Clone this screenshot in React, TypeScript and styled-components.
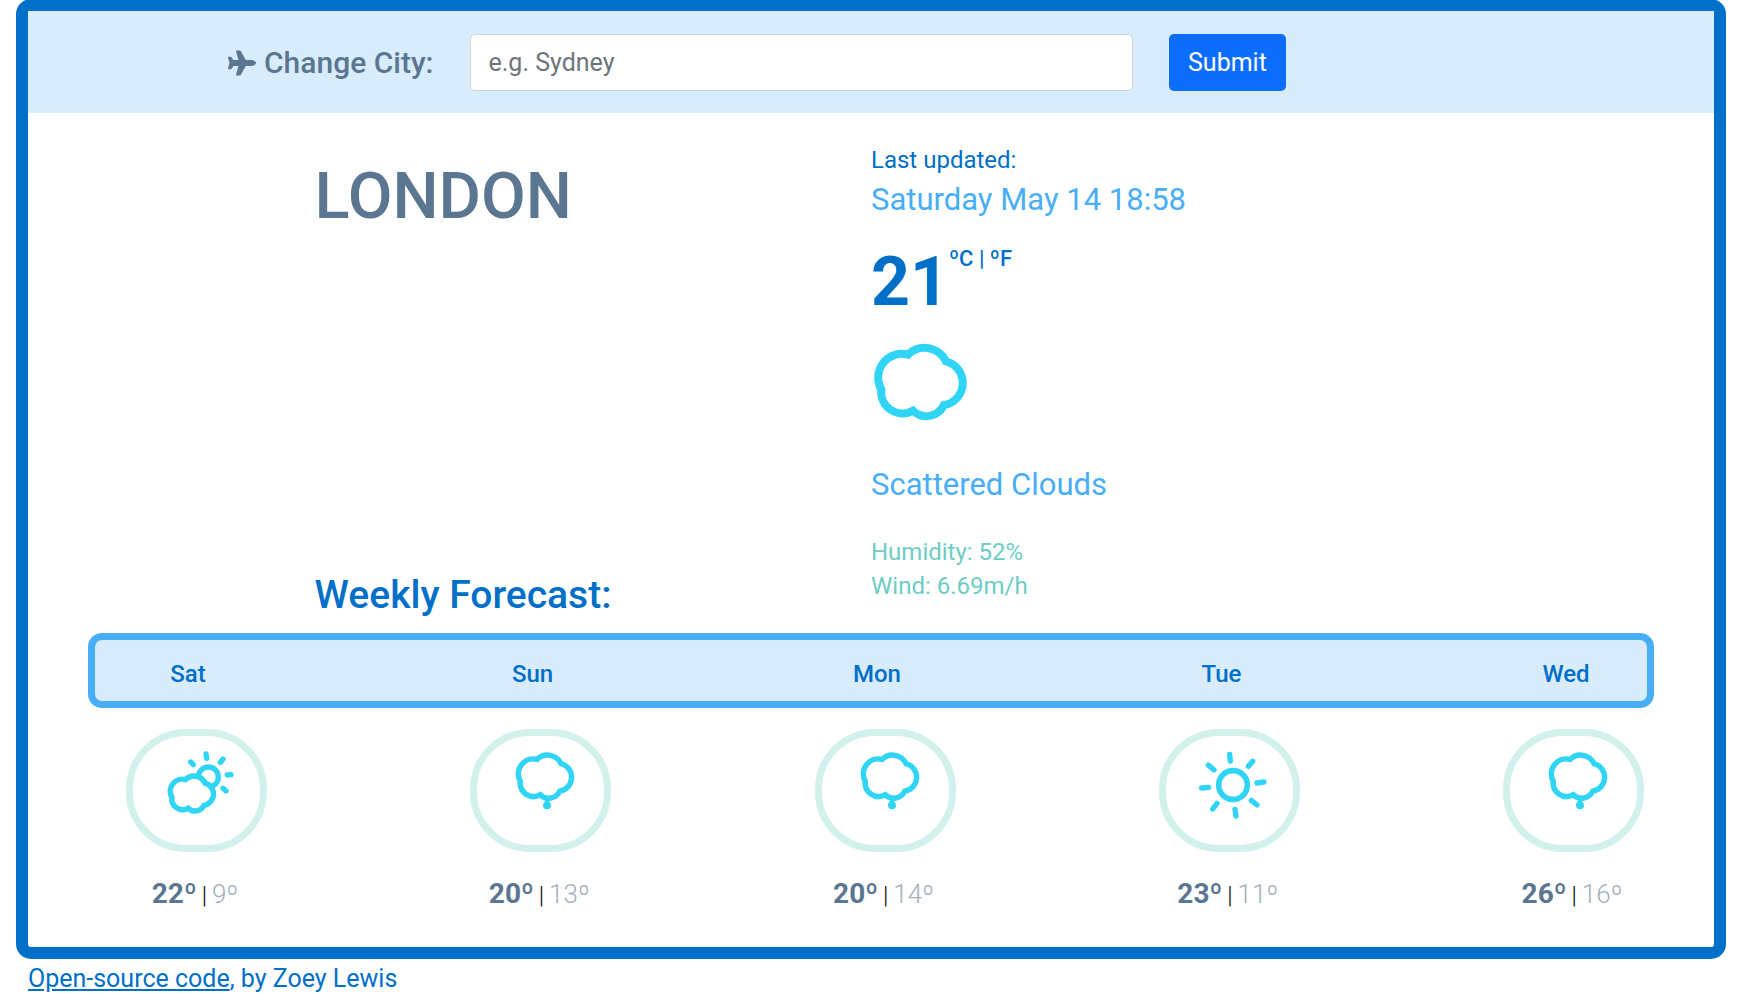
import React from "react";
import styled, { createGlobalStyle } from "styled-components";
import { FaPlane } from "react-icons/fa6";

const GlobalStyle = createGlobalStyle`
  *, *::before, *::after { box-sizing: border-box; }
  body {
    margin: 0;
    background: #fff;
    color: #006fc8;
    font-family: Roboto, "Liberation Sans", sans-serif;
    font-size: 24px;
    line-height: 34px;
  }
  h1, h2, p, ul { margin: 0; padding: 0; }
`;

const Page = styled.div`
  padding: 0 16px;
`;

const Frame = styled.main`
  margin-top: -1px;
  border: 12px solid #006fc8;
  border-radius: 15px;
  background: #fff;
`;

const SearchBar = styled.form`
  display: grid;
  grid-template-columns: 3fr 5fr 4fr;
  align-items: center;
  padding: 23px 0 22px;
  background: #d9ecfc;
`;

const SearchLabel = styled.label`
  display: flex;
  align-items: center;
  justify-content: flex-end;
  gap: 8px;
  padding-right: 16px;
  color: #5a7690;
  font-size: 30px;
  font-weight: 500;
`;

const SearchField = styled.div`
  padding: 0 19px 0 20px;
`;

const CityInput = styled.input`
  display: block;
  width: 100%;
  height: 57px;
  padding: 0 18px;
  border: 1px solid #ced4da;
  border-radius: 5px;
  background: #fff;
  color: #212529;
  font: inherit;
  font-size: 25px;
  &::placeholder { color: #6c757d; opacity: 1; }
`;

const SubmitButton = styled.button`
  justify-self: start;
  height: 57px;
  margin-left: 17px;
  padding: 0 19px;
  border: 0;
  border-radius: 5px;
  background: #0d6efd;
  color: #fff;
  font: inherit;
  font-size: 25px;
  cursor: pointer;
`;

const Overview = styled.section`
  display: grid;
  grid-template-columns: 1fr 1fr;
  padding-top: 30px;
`;

const Headings = styled.div`
  display: flex;
  flex-direction: column;
  justify-content: space-between;
  padding: 13px 0 0 34%;
`;

const City = styled.h1`
  color: #5a7690;
  font-size: 65px;
  font-weight: 500;
  line-height: 80px;
`;

const ForecastTitle = styled.h2`
  font-size: 39px;
  font-weight: 500;
  line-height: 44px;
`;

const Current = styled.div`
  padding-bottom: 14px;
`;

const Highlight = styled.p`
  color: #48aef8;
  font-size: 31px;
  line-height: 45px;
`;

const Temperature = styled.div`
  display: flex;
  align-items: flex-start;
  margin: 20px 0 12px;
`;

const Degrees = styled.strong`
  font-size: 68px;
  font-weight: 700;
  line-height: 80px;
`;

const Units = styled.span`
  font-size: 22px;
  font-weight: 500;
`;

const UnitLink = styled.a`
  color: inherit;
  text-decoration: none;
`;

const CurrentIcon = styled.svg`
  display: block;
  width: 100px;
  height: 100px;
  margin-bottom: 28px;
`;

const Details = styled.ul`
  margin-top: 28px;
  list-style: none;
  color: #6dcdc4;
`;

const Week = styled.section`
  padding: 16px 60px 35px;
`;

const DayBar = styled.div`
  display: flex;
  justify-content: space-between;
  padding: 17px 21px 10px 33px;
  border: 7px solid #48aef8;
  border-radius: 14px;
  background: #d9ecfc;
`;

const DayName = styled.span`
  width: 120px;
  font-weight: 500;
  text-align: center;
`;

const DayRow = styled.div`
  display: flex;
  justify-content: space-between;
  padding: 21px 10px 0 38px;
`;

const Day = styled.div`
  width: 141px;
`;

const Pill = styled.div`
  padding: 9px 20px 20px 27px;
  border: 7px solid #d2f1ed;
  border-radius: 60px;
`;

const DayIcon = styled.svg`
  display: block;
  width: 80px;
  height: 80px;
`;

const Range = styled.p`
  display: flex;
  align-items: baseline;
  justify-content: center;
  gap: 5px;
  margin-top: 25px;
  padding-right: 3px;
  color: #000;
`;

const High = styled.strong`
  color: #5a7690;
  font-size: 28px;
  font-weight: 700;
`;

const Divider = styled.span`
  font-weight: 300;
`;

const Low = styled.span`
  color: #a0b0c0;
  font-size: 26px;
  font-weight: 300;
`;

const Footer = styled.footer`
  padding: 3px 12px;
  font-size: 25px;
`;

const SourceLink = styled.a`
  color: inherit;
  text-decoration: underline;
`;

const SKY = "#30d5f5";

function CloudPath({ stroke }: { stroke: number }) {
  return (
    <path
      d="M204 374 A71 71 0 0 0 124 478 A64 64 0 0 0 219 542 A58 58 0 0 0 312 525 A67 67 0 0 0 318 394 A71 71 0 0 0 204 374 Z"
      fill="#fff"
      stroke={SKY}
      strokeWidth={stroke}
    />
  );
}

function Rays({ lines }: { lines: number[][] }) {
  return (
    <g stroke={SKY} strokeWidth={16} strokeLinecap="round">
      {lines.map(([x1, y1, x2, y2]) => (
        <line key={`${x1}-${y1}`} x1={x1} y1={y1} x2={x2} y2={y2} />
      ))}
    </g>
  );
}

type Sky = "partly" | "rain" | "sun";

function SkyIcon({ sky }: { sky: Sky }) {
  if (sky === "sun") {
    return (
      <DayIcon viewBox="160 76 240 240" role="img" aria-label="Clear sky">
        <circle cx={280} cy={196} r={43} fill="none" stroke={SKY} strokeWidth={17} />
        <Rays
          lines={[
            [270, 104, 272, 124],
            [339, 125, 326, 140],
            [373, 187, 352, 190],
            [352, 256, 335, 242],
            [289, 289, 286, 269],
            [219, 268, 232, 251],
            [186, 205, 207, 203],
            [206, 136, 223, 151],
          ]}
        />
      </DayIcon>
    );
  }
  if (sky === "rain") {
    return (
      <DayIcon viewBox="146 75 240 240" role="img" aria-label="Rain">
        <g transform="translate(188 105) scale(0.63) translate(-113 -353)">
          <CloudPath stroke={26} />
        </g>
        <path d="M275 232 C278 244 287 247 287 256 A12 12 0 0 1 263 256 C263 247 272 244 275 232 Z" fill={SKY} />
      </DayIcon>
    );
  }
  return (
    <DayIcon viewBox="121 76 240 240" role="img" aria-label="Partly cloudy">
      <circle cx={266} cy={172} r={30} fill="none" stroke={SKY} strokeWidth={16} />
      <Rays
        lines={[
          [259, 103, 261, 116],
          [310, 118, 302, 128],
          [334, 165, 323, 166],
          [319, 214, 310, 206],
          [213, 127, 221, 135],
        ]}
      />
      <g transform="translate(151 169) scale(0.512) translate(-113 -353)">
        <CloudPath stroke={32} />
      </g>
    </DayIcon>
  );
}

const days: { name: string; sky: Sky; high: number; low: number }[] = [
  { name: "Sat", sky: "partly", high: 22, low: 9 },
  { name: "Sun", sky: "rain", high: 20, low: 13 },
  { name: "Mon", sky: "rain", high: 20, low: 14 },
  { name: "Tue", sky: "sun", high: 23, low: 11 },
  { name: "Wed", sky: "rain", high: 26, low: 16 },
];

export default function App() {
  return (
    <Page>
      <GlobalStyle />
      <Frame>
        <SearchBar onSubmit={(event) => event.preventDefault()}>
          <SearchLabel htmlFor="city">
            <FaPlane size={28} aria-hidden="true" />
            Change City:
          </SearchLabel>
          <SearchField>
            <CityInput id="city" type="text" placeholder="e.g. Sydney" autoComplete="off" />
          </SearchField>
          <SubmitButton type="submit">Submit</SubmitButton>
        </SearchBar>

        <Overview>
          <Headings>
            <City>LONDON</City>
            <ForecastTitle>Weekly Forecast:</ForecastTitle>
          </Headings>
          <Current>
            <p>Last updated:</p>
            <Highlight>Saturday May 14 18:58</Highlight>
            <Temperature>
              <Degrees>21</Degrees>
              <Units>
                <UnitLink href="#celsius">ºC</UnitLink> | <UnitLink href="#fahrenheit">ºF</UnitLink>
              </Units>
            </Temperature>
            <CurrentIcon viewBox="93 312 300 300" role="img" aria-label="Scattered clouds">
              <CloudPath stroke={24} />
            </CurrentIcon>
            <Highlight>Scattered Clouds</Highlight>
            <Details>
              <li>Humidity: 52%</li>
              <li>Wind: 6.69m/h</li>
            </Details>
          </Current>
        </Overview>

        <Week>
          <DayBar>
            {days.map((day) => (
              <DayName key={day.name}>{day.name}</DayName>
            ))}
          </DayBar>
          <DayRow>
            {days.map((day) => (
              <Day key={day.name}>
                <Pill>
                  <SkyIcon sky={day.sky} />
                </Pill>
                <Range>
                  <High>{day.high}º</High>
                  <Divider>|</Divider>
                  <Low>{day.low}º</Low>
                </Range>
              </Day>
            ))}
          </DayRow>
        </Week>
      </Frame>
      <Footer>
        <SourceLink href="#source">Open-source code</SourceLink>, by Zoey Lewis
      </Footer>
    </Page>
  );
}
